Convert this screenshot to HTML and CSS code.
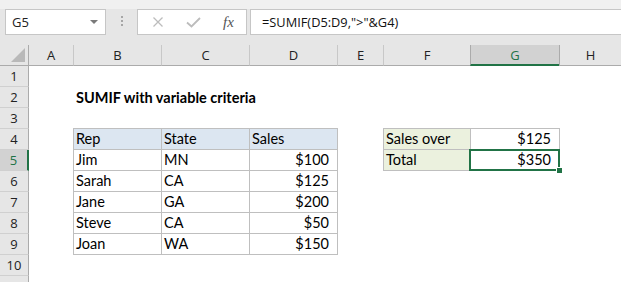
FILE: index.html
```html
<!DOCTYPE html>
<html lang="en">
<head>
  <meta charset="UTF-8">
  <title>SUMIF with variable criteria</title>
  <link rel="stylesheet" href="styles.css">
</head>
<body>

  <div class="toolbar">
    <div class="namebox">G5<span class="caret"></span></div>
    <div class="grip"><i></i><i></i><i></i></div>
    <div class="fxbox">
      <svg class="cancel" width="12" height="12" viewBox="0 0 12 12"><path d="M1.5 1.5L10.5 10.5M10.5 1.5L1.5 10.5" stroke="#bcbcbc" stroke-width="1.3" fill="none"/></svg>
      <svg class="enter" width="15" height="11" viewBox="0 0 15 11"><path d="M1 5.5L5.5 9.5L14 1" stroke="#bcbcbc" stroke-width="1.8" fill="none"/></svg>
      <span class="fx">fx</span>
    </div>
    <div class="formula">=SUMIF(D5:D9,"&gt;"&amp;G4)</div>
  </div>

  <div class="sheet">
    <div class="corner"><span class="tri"></span></div>
    <div class="colhead">A</div>
    <div class="colhead">B</div>
    <div class="colhead">C</div>
    <div class="colhead">D</div>
    <div class="colhead">E</div>
    <div class="colhead">F</div>
    <div class="colhead sel">G</div>
    <div class="colhead after">H</div>

    <div class="rowhead">1</div>
    <div class="rowhead">2</div>
    <div class="rowhead">3</div>
    <div class="rowhead">4</div>
    <div class="rowhead sel">5</div>
    <div class="rowhead">6</div>
    <div class="rowhead">7</div>
    <div class="rowhead">8</div>
    <div class="rowhead">9</div>
    <div class="rowhead">10</div>
    <div class="rowhead"></div>

    <div class="title">SUMIF with variable criteria</div>

    <div class="data">
      <div class="head">Rep</div><div class="head">State</div><div class="head">Sales</div>
      <div>Jim</div><div>MN</div><div class="num">$100</div>
      <div>Sarah</div><div>CA</div><div class="num">$125</div>
      <div>Jane</div><div>GA</div><div class="num">$200</div>
      <div>Steve</div><div>CA</div><div class="num">$50</div>
      <div>Joan</div><div>WA</div><div class="num">$150</div>
    </div>

    <div class="lookup">
      <div class="label">Sales over</div><div class="num">$125</div>
      <div class="label">Total</div><div class="num active">$350</div>
    </div>
  </div>

</body>
</html>
```

FILE: styles.css
```css
html, body {
  margin: 0;
  overflow: hidden;
}
body {
  width: 621px;
  height: 282px;
  background: #fff;
  font-family: "Open Sans", "Noto Sans", sans-serif;
}

/* formula bar */
.toolbar {
  display: flex;
  align-items: flex-start;
  height: 45px;
  box-sizing: border-box;
  padding: 9px 0 0 5px;
  background: linear-gradient(#f0f0f0 0 9px, #e6e6e6 9px);
}
.namebox {
  display: flex;
  align-items: center;
  justify-content: space-between;
  width: 101px;
  height: 26px;
  box-sizing: border-box;
  padding: 0 7px 0 6px;
  background: #fff;
  border: 1px solid #c6c6c6;
  font-size: 13px;
  color: #222;
}
.caret {
  border-left: 4px solid transparent;
  border-right: 4px solid transparent;
  border-top: 4px solid #7a7a7a;
}
.grip {
  width: 31px;
  display: flex;
  flex-direction: column;
  align-items: center;
  gap: 2px;
  padding-top: 7px;
}
.grip i {
  width: 2px;
  height: 2px;
  background: #a6a6a6;
}
.fxbox {
  display: flex;
  align-items: center;
  width: 110px;
  height: 26px;
  box-sizing: border-box;
  padding-left: 14px;
  background: #fff;
  border: 1px solid #c6c6c6;
}
.enter {
  margin-left: 22px;
}
.fx {
  margin-left: 22px;
  font-family: "Liberation Serif", serif;
  font-style: italic;
  font-size: 15px;
  color: #555;
}
.formula {
  flex: 1;
  margin: 0 -2px 0 3px;
  height: 26px;
  box-sizing: border-box;
  padding-left: 11px;
  background: #fff;
  border: 1px solid #c6c6c6;
  font-size: 12.8px;
  line-height: 24px;
  color: #111;
}

/* sheet */
.sheet {
  display: grid;
  grid-template-columns: 29px 44px 88px 88px 88px 46px 87px 89px 1fr;
  grid-template-rows: repeat(12, 21px);
  font-family: Lato, "Open Sans", sans-serif;
  font-size: 14.5px;
  color: #000;
}
.corner, .colhead, .rowhead {
  display: flex;
  align-items: center;
  justify-content: center;
  box-sizing: border-box;
  background: #e6e6e6;
  font-family: "Open Sans", "Noto Sans", sans-serif;
  font-size: 13px;
  color: #222;
}
.corner {
  position: relative;
  border-right: 1px solid #ababab;
  border-bottom: 1px solid #ababab;
}
.tri {
  position: absolute;
  right: 3px;
  bottom: 3px;
  border-left: 14px solid transparent;
  border-bottom: 14px solid #b9b9b9;
}
.colhead {
  border-bottom: 1px solid #ababab;
}
.colhead + .colhead {
  border-left: 1px solid #c8c8c8;
}
.colhead.sel {
  background: #d2d2d2;
  color: #217346;
  border-left-color: #ababab;
  border-bottom: 2px solid #217346;
}
.colhead.after {
  border-left-color: #ababab;
}
.rowhead {
  grid-column: 1;
  border-right: 1px solid #ababab;
  border-bottom: 1px solid #d0d0d0;
}
.rowhead.sel {
  background: #d2d2d2;
  color: #217346;
  border-right: 2px solid #217346;
}

.title {
  grid-column: 3 / span 4;
  grid-row: 3;
  padding-left: 3px;
  line-height: 21px;
  font-weight: 700;
  white-space: nowrap;
}

.data, .lookup {
  display: grid;
  grid-template-rows: repeat(auto-fill, 21px);
  box-shadow: 0 -1px 0 #bfbfbf, 1px 0 0 #bfbfbf, 1px -1px 0 #bfbfbf;
}
.data {
  grid-column: 3 / span 3;
  grid-row: 5 / span 6;
  grid-template-columns: repeat(3, 88px);
}
.lookup {
  grid-column: 7 / span 2;
  grid-row: 5 / span 2;
  grid-template-columns: 87px 89px;
}
.data > div, .lookup > div {
  box-sizing: border-box;
  height: 21px;
  padding: 0 3px 0 2px;
  border-left: 1px solid #bfbfbf;
  border-bottom: 1px solid #bfbfbf;
  line-height: 20px;
  white-space: nowrap;
}
.head {
  background: #dce6f1;
}
.label {
  background: #ebf1de;
}
.data > .num, .lookup > .num {
  text-align: right;
  padding-right: 8px;
}
.active {
  position: relative;
}
.active::before {
  content: "";
  position: absolute;
  left: -2px;
  top: -1px;
  right: -1px;
  bottom: -1px;
  border: 2px solid #217346;
}
.active::after {
  content: "";
  position: absolute;
  right: -4px;
  bottom: -4px;
  width: 5px;
  height: 5px;
  background: #217346;
  border: 1px solid #fff;
  z-index: 1;
}
```
